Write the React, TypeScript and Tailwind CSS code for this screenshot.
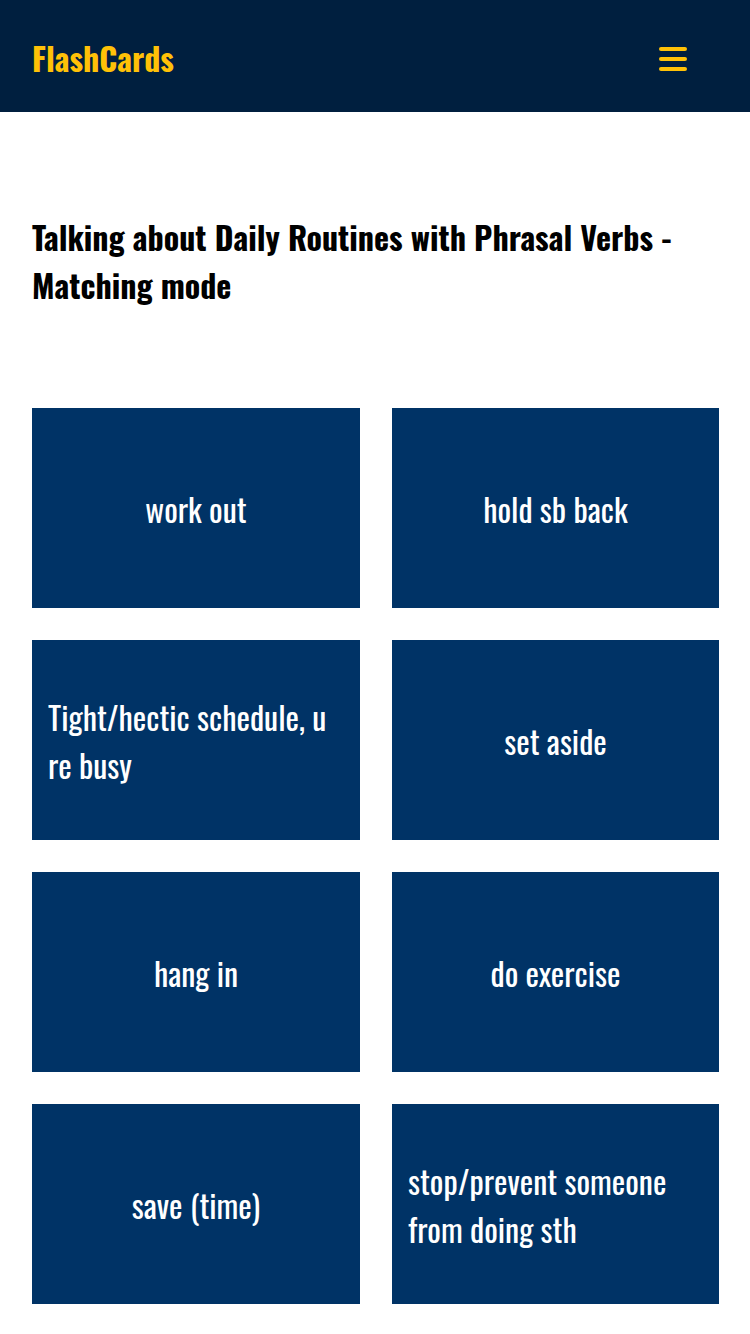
const cards = [
  "work out",
  "hold sb back",
  "Tight/hectic schedule, u re busy",
  "set aside",
  "hang in",
  "do exercise",
  "save (time)",
  "stop/prevent someone from doing sth",
];

const font = {
  fontFamily: '"Oswald", "Liberation Sans Narrow", "DejaVu Sans Condensed", "Liberation Sans", sans-serif',
};

export default function App() {
  return (
    <div className="min-h-screen bg-white" style={font}>
      {/* Navbar */}
      <header className="h-[112px] bg-[#001f3f] flex items-center justify-between pl-8 pr-[63px]">
        <span className="text-[32px] leading-none font-bold text-[#ffc107] pt-1">FlashCards</span>
        <button type="button" className="flex flex-col gap-[6px] mt-[6px]">
          <span className="block w-[28px] h-1 rounded-full bg-[#ffc107]" />
          <span className="block w-[28px] h-1 rounded-full bg-[#ffc107]" />
          <span className="block w-[28px] h-1 rounded-full bg-[#ffc107]" />
        </button>
      </header>

      <main className="pl-8 pt-[101px]">
        <h1 className="text-[32px] leading-[48px] font-bold text-black pr-8">
          Talking about Daily Routines with Phrasal Verbs - Matching mode
        </h1>

        <div className="grid grid-cols-[328px_327px] gap-8 mt-[99px] pb-8">
          {cards.map((text) => (
            <div
              key={text}
              className="h-[200px] bg-[#003366] flex items-center justify-center px-4 pt-[2px] text-white text-[32px] leading-[48px]"
            >
              <span>{text}</span>
            </div>
          ))}
        </div>
      </main>
    </div>
  );
}
